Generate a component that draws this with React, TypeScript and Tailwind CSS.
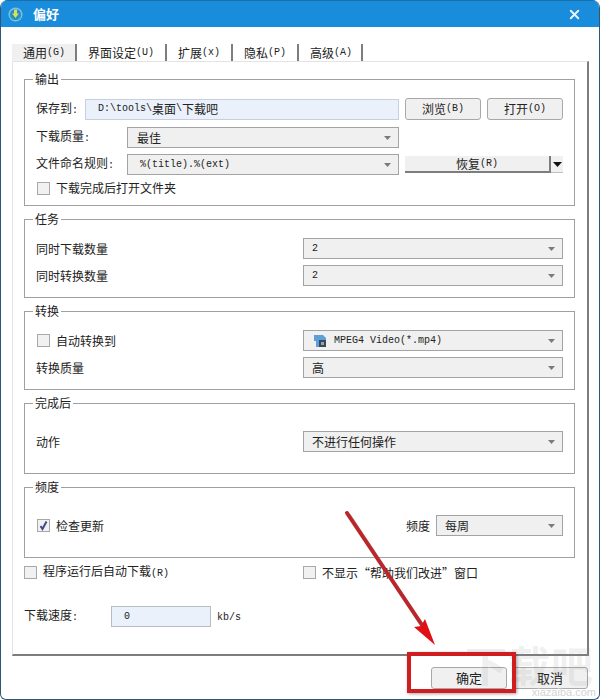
import React from "react";
import { X } from "lucide-react";

const CJK = "font-['Noto_Sans_CJK_SC','Liberation_Sans',sans-serif]";

/* half-width latin, like SimSun */
function L({ children }: { children: React.ReactNode }) {
  return <span className="font-['Liberation_Mono',monospace] text-[10px]">{children}</span>;
}

function Caret() {
  return (
    <svg width="7" height="4" viewBox="0 0 7 4" className="shrink-0">
      <path d="M0 0H7L3.5 4Z" fill="#7a7a7a" />
    </svg>
  );
}

function Combo({ className, children }: { className: string; children: React.ReactNode }) {
  return (
    <div className={`flex h-[21px] items-center justify-between border border-[#a3a3a3] bg-[#f0f0f0] pr-[7px] ${className}`}>
      <div className="flex items-center">{children}</div>
      <Caret />
    </div>
  );
}

function Check({ checked }: { checked?: boolean }) {
  return (
    <span className="ml-[1px] flex h-[13px] w-[13px] shrink-0 items-center justify-center border border-[#a8a8a8] bg-[#f1f1f1]">
      {checked && (
        <svg width="11" height="11" viewBox="0 0 11 11">
          <path d="M2.5 6 L4.5 9 L8.5 1.5" fill="none" stroke="#3f4a8c" strokeWidth="2" />
        </svg>
      )}
    </span>
  );
}

function Group({ title, className, children }: { title: string; className: string; children: React.ReactNode }) {
  return (
    <div className={`relative border border-[#a0a0a0] ${className}`}>
      <span className="absolute left-[8px] top-[-9px] bg-white px-[2px] leading-[16px] text-[#222]">{title}</span>
      {children}
    </div>
  );
}

function Tab({ className, children }: { className: string; children: React.ReactNode }) {
  return (
    <div className={`flex h-[17px] items-center border-r-2 border-[#7d7d7d] pl-[11px] ${className}`}>{children}</div>
  );
}

function Button({ className, children }: { className: string; children: React.ReactNode }) {
  return (
    <div className={`flex items-center justify-center rounded-[3px] border border-[#a8a8a8] bg-[#f0f0f0] ${className}`}>
      {children}
    </div>
  );
}

export default function App() {
  return (
    <div className={`relative flex h-[700px] w-[600px] flex-col overflow-hidden rounded-t-[8px] rounded-b-[6px] border-x border-b border-[#2f5878] bg-white text-[12px] leading-[14px] text-[#222] ${CJK}`}>
      {/* 타이틀바 */}
      <div className="flex h-[27px] shrink-0 items-center justify-between border-t border-[#1c6fa8] bg-[#1a8cdc] pl-[7px] pr-[17px] text-white">
        <div className="flex items-center gap-[10px]">
          <svg width="15" height="15" viewBox="0 0 15 15">
            <circle cx="7.5" cy="7.5" r="7" fill="#7cc0ea" />
            <circle cx="7.5" cy="7.5" r="5.5" fill="#2f86c8" />
            <path d="M2 7.5A5.5 5.5 0 0 0 13 7.5L7.5 13Z" fill="#25a0a0" />
            <path d="M6 2.5H9V6.5H11L7.5 11L4 6.5H6Z" fill="#c8e85a" />
          </svg>
          <span className="text-[13px] font-bold">偏好</span>
        </div>
        <X size={15} strokeWidth={3} color="#e8f4fc" />
      </div>

      <div className="flex flex-col pl-[11px] pr-[10px] pt-[17px]">
        {/* 탭 */}
        <div className="flex">
          <Tab className="w-[65px] bg-[#f0f0f0]">通用<L>(G)</L></Tab>
          <Tab className="w-[90px]">界面设定<L>(U)</L></Tab>
          <Tab className="w-[66px]">扩展<L>(x)</L></Tab>
          <Tab className="w-[66px]">隐私<L>(P)</L></Tab>
          <Tab className="w-[64px]">高级<L>(A)</L></Tab>
        </div>

        {/* 패널 */}
        <div className="flex h-[595px] flex-col gap-[13px] border-t border-l border-t-[#e4e4e4] border-l-[#e4e4e4] border-r-2 border-r-[#7d7d7d] border-b-2 border-b-[#7d7d7d] pl-[11px] pr-[12px] pt-[17px]">
          <Group title="输出" className="flex h-[127px] shrink-0 flex-col pl-[11px] pr-[11px] pt-[18px]">
            <div className="flex h-[22px] items-center">
              <span className="w-[48px]">保存到<L>:</L></span>
              <div className="ml-[1px] flex h-[21px] w-[314px] items-center border border-[#c6d0dc] bg-[#eaf1fb] pl-[12px]">
                <L>D:\tools\</L>桌面<L>\</L>下载吧
              </div>
              <Button className="ml-[6px] h-[22px] w-[76px]">浏览<L>(B)</L></Button>
              <Button className="ml-[6px] h-[22px] w-[76px]">打开<L>(O)</L></Button>
            </div>
            <div className="mt-[7px] flex h-[21px] items-center">
              <span className="w-[91px]">下载质量<L>:</L></span>
              <Combo className="w-[272px] pl-[9px]">最佳</Combo>
            </div>
            <div className="mt-[6px] flex h-[21px] items-center">
              <span className="w-[91px]">文件命名规则<L>:</L></span>
              <Combo className="w-[272px] pl-[12px]"><L>%(title).%(ext)</L></Combo>
              <div className="ml-[6px] flex h-[17px] w-[158px]">
                <div className="flex flex-1 items-center justify-center border-b-2 border-r-2 border-[#7d7d7d] bg-[#f0f0f0]">
                  恢复<L>(R)</L>
                </div>
                <div className="flex w-[12px] items-center justify-center border-b border-[#c0c0c0] bg-[#f0f0f0]">
                  <svg width="9" height="5" viewBox="0 0 9 5">
                    <path d="M0 0H9L4.5 5Z" fill="#111" />
                  </svg>
                </div>
              </div>
            </div>
            <div className="mt-[6px] flex items-center gap-[6px]">
              <Check />
              <span>下载完成后打开文件夹</span>
            </div>
          </Group>

          <Group title="任务" className="flex h-[79px] shrink-0 flex-col gap-[6px] pl-[11px] pr-[11px] pt-[18px]">
            <div className="flex items-center justify-between">
              <span>同时下载数量</span>
              <Combo className="w-[260px] pl-[8px]"><L>2</L></Combo>
            </div>
            <div className="flex items-center justify-between">
              <span>同时转换数量</span>
              <Combo className="w-[260px] pl-[8px]"><L>2</L></Combo>
            </div>
          </Group>

          <Group title="转换" className="flex h-[79px] shrink-0 flex-col gap-[6px] pl-[11px] pr-[11px] pt-[18px]">
            <div className="flex items-center justify-between">
              <div className="flex items-center gap-[6px]">
                <Check />
                <span>自动转换到</span>
              </div>
              <Combo className="w-[260px] pl-[9px]">
                <svg width="15" height="15" viewBox="0 0 15 15" className="mr-[6px]">
                  <path d="M1 2H10L13 5V14H3V8H1Z" fill="#5d9fd6" />
                  <path d="M6 7H13V14H6Z" fill="#3a4a55" />
                  <path d="M8 9H11V12H8Z" fill="#8fa4b0" />
                </svg>
                <L>MPEG4 Video(*.mp4)</L>
              </Combo>
            </div>
            <div className="flex items-center justify-between">
              <span>转换质量</span>
              <Combo className="w-[260px] pl-[8px]">高</Combo>
            </div>
          </Group>

          <Group title="完成后" className="flex h-[71px] shrink-0 items-start justify-between pl-[11px] pr-[11px] pt-[27px]">
            <span className="leading-[21px]">动作</span>
            <Combo className="w-[260px] pl-[8px]">不进行任何操作</Combo>
          </Group>

          <Group title="频度" className="flex h-[71px] shrink-0 items-start justify-between pl-[11px] pr-[11px] pt-[27px]">
            <div className="flex h-[21px] items-center gap-[6px]">
              <Check checked />
              <span>检查更新</span>
            </div>
            <div className="flex items-center gap-[6px]">
              <span>频度</span>
              <Combo className="w-[127px] pl-[8px]">每周</Combo>
            </div>
          </Group>

          <div className="-mt-[7px] flex shrink-0">
            <div className="-ml-[1px] flex w-[279px] items-center gap-[6px]">
              <Check />
              <span>程序运行后自动下载<L>(R)</L></span>
            </div>
            <div className="flex items-center gap-[6px]">
              <Check />
              <span>不显示“帮助我们改进”窗口</span>
            </div>
          </div>

          <div className="mt-[12px] flex shrink-0 items-center">
            <span className="w-[87px]">下载速度<L>:</L></span>
            <div className="flex h-[21px] w-[100px] items-center border border-[#b4bcc6] bg-[#eaf1fb] pl-[12px]"><L>0</L></div>
            <span className="ml-[6px]"><L>kb/s</L></span>
          </div>
        </div>

        {/* 하단 버튼 */}
        <div className="flex justify-end gap-[5px] pr-[1px] pt-[11px]">
          <Button className="h-[22px] w-[76px]"><span className="text-[13px]">确定</span></Button>
          <Button className="h-[22px] w-[76px]"><span className="text-[13px]">取消</span></Button>
        </div>
      </div>

      {/* 워터마크 */}
      <div className="pointer-events-none absolute left-[464px] top-[640px] text-[42px] font-bold leading-[48px] tracking-[1px] text-[#8c8c8c]/15">
        下载吧
      </div>
      <div className="pointer-events-none absolute bottom-[1px] right-[3px] font-['Liberation_Sans',sans-serif] text-[11px] leading-[12px] text-[#d4d4d4]">
        xiazaiba.com
      </div>

      {/* 빨간 강조 상자와 화살표 */}
      <div className="pointer-events-none absolute left-[406px] top-[652px] h-[41px] w-[109px] border-[4px] border-[#cf1d20] shadow-[1px_1px_3px_rgba(0,0,0,0.35)]" />
      <svg width="600" height="700" viewBox="0 0 600 700" className="pointer-events-none absolute left-[-1px] top-0">
        <path d="M347 513 L426 632" stroke="#000" strokeOpacity="0.18" strokeWidth="4" transform="translate(2 2)" />
        <path d="M347 513 L424 628" stroke="#b9272a" strokeWidth="4" strokeLinecap="round" />
        <path d="M435 645 L414 627 L421 626 L425 619 Z" fill="#e01015" />
      </svg>
    </div>
  );
}
